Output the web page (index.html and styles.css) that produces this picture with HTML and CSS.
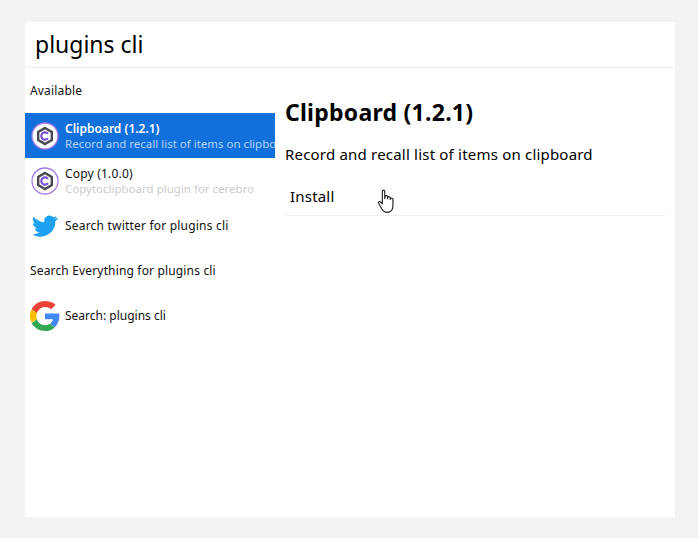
FILE: index.html
```html
<!DOCTYPE html>
<html lang="en">
<head>
    <meta charset="UTF-8">
    <meta name="viewport" content="width=device-width, initial-scale=1.0">
    <title>Cerebro</title>
    <link rel="stylesheet" href="styles.css">
</head>
<body>
    <svg class="defs" width="0" height="0">
        <symbol id="plugin" viewBox="0 0 30 30">
            <circle cx="15" cy="15" r="13" fill="#fff" stroke="#a67be8" stroke-width="1.3"/>
            <path d="M15 7l6.800 3.900v8.200L15 23l-6.800-3.900v-8.200z" fill="none" stroke="#4a4850" stroke-width="2.400"/>
            <path d="M18 12.800a3.700 3.700 0 1 0 0 4.400" fill="none" stroke="#7a4fd8" stroke-width="2.200"/>
        </symbol>
    </svg>

    <div class="app">
        <div class="search">plugins cli</div>
        <div class="main">
            <div class="results">
                <div class="group">Available</div>

                <div class="row selected">
                    <svg class="icon" width="30" height="30"><use href="#plugin"/></svg>
                    <div class="row-text">
                        <div class="title">Clipboard (1.2.1)</div>
                        <div class="sub">Record and recall list of items on clipboard</div>
                    </div>
                </div>

                <div class="row">
                    <svg class="icon" width="30" height="30"><use href="#plugin"/></svg>
                    <div class="row-text">
                        <div class="title">Copy (1.0.0)</div>
                        <div class="sub">Copytoclipboard plugin for cerebro</div>
                    </div>
                </div>

                <div class="row">
                    <svg class="icon" width="30" height="30" viewBox="-2 -2 28 28">
                        <path fill="#1da1f2" d="M23.500 4.600c-.9.400-1.800.6-2.800.8 1-.6 1.800-1.500 2.100-2.700-.9.600-2 1-3.100 1.200A4.900 4.900 0 0 0 11.400 8.400C7.400 8.200 3.800 6.300 1.400 3.300c-1.300 2.200-.7 5.100 1.500 6.600-.8 0-1.500-.2-2.200-.6 0 2.400 1.700 4.400 3.900 4.900-.7.200-1.500.2-2.200.1.600 2 2.400 3.400 4.600 3.400A9.900 9.900 0 0 1 .2 19.700a14 14 0 0 0 21.500-12.400c1-.7 1.800-1.600 2.400-2.500z"/>
                    </svg>
                    <div class="row-text">
                        <div class="title">Search twitter for plugins cli</div>
                    </div>
                </div>

                <div class="group">Search Everything for plugins cli</div>

                <div class="row">
                    <svg class="icon" width="30" height="30" viewBox="0 0 48 48">
                        <path fill="#ea4335" d="M24 9.500c3.900 0 7.100 1.300 9.700 3.700l7.200-7.200C36.500 2 30.800 0 24 0 14.600 0 6.500 5.400 2.600 13.200l8.400 6.500C12.900 13.800 18 9.500 24 9.500z"/>
                        <path fill="#4285f4" d="M47 24.500c0-1.600-.1-3.100-.4-4.500H24v9h12.900c-.6 3-2.200 5.500-4.700 7.200l7.500 5.800C44.100 38 47 31.800 47 24.500z"/>
                        <path fill="#fbbc05" d="M11 28.700a14.500 14.500 0 0 1 0-9L2.600 13.200a24 24 0 0 0 0 21.600z"/>
                        <path fill="#34a853" d="M24 48c6.500 0 11.900-2.100 15.700-5.800l-7.500-5.800c-2.100 1.400-4.800 2.200-8.200 2.200-6 0-11.100-4-13-9.500l-8.400 6.500C6.500 42.600 14.600 48 24 48z"/>
                    </svg>
                    <div class="row-text">
                        <div class="title tight">Search: plugins cli</div>
                    </div>
                </div>
            </div>

            <div class="preview">
                <h2>Clipboard (1.2.1)</h2>
                <p>Record and recall list of items on clipboard</p>
                <div class="action">Install</div>
            </div>
        </div>

        <svg class="hand" width="19" height="26" viewBox="0 0 18 25">
            <path fill="#fff" stroke="#222" stroke-width="1.1" stroke-linejoin="round" d="M5 2.200c0-1.500 2.300-1.500 2.300 0v7l.4-2.200c.8-1 2.200-.7 2.300.4v2l.3-1.500c.8-.9 2.200-.6 2.300.5v1.700l.3-.9c.8-.8 2.200-.4 2.300.7v6.300c0 3.800-2.200 6.300-5.400 6.300-2.500 0-4-1-5.300-3.200L1.500 14c-.9-1.400.7-2.600 1.800-1.500L5 14.300z"/>
        </svg>
    </div>
</body>
</html>
```

FILE: styles.css
```css
* {
    margin: 0;
    padding: 0;
    box-sizing: border-box;
}

body {
    font-family: "Noto Sans", "Open Sans", sans-serif;
    background: #f3f3f3;
    color: #111;
    padding: 22px 23px 21px 25px;
    height: 538px;
    overflow: hidden;
}

.defs {
    position: absolute;
}

.app {
    position: relative;
    background: white;
    height: 495px;
}

.search {
    height: 46px;
    padding-left: 10px;
    border-bottom: 1px solid #eee;
    font-size: 23px;
    line-height: 45px;
    color: #000;
}

.main {
    display: flex;
}

.results {
    width: 250px;
    flex-shrink: 0;
}

.group {
    height: 45px;
    padding-left: 5px;
    font-size: 12px;
    letter-spacing: .16px;
    line-height: 45px;
}

.row {
    display: flex;
    align-items: center;
    gap: 5px;
    height: 45px;
    padding-left: 5px;
    overflow: hidden;
    white-space: nowrap;
}

.row.selected {
    background: #1170dc;
    color: white;
}

.icon {
    flex-shrink: 0;
}

.title {
    font-size: 12px;
    letter-spacing: .2px;
    line-height: 15px;
}

.title.tight {
    letter-spacing: 0;
}

.sub {
    font-size: 11.5px;
    line-height: 15px;
    color: #ccc;
}

.selected .title {
    font-weight: 600;
    letter-spacing: 0;
}

.selected .sub {
    color: #b5d3f5;
}

.preview {
    flex: 1;
    padding: 0 10px;
}

.preview h2 {
    font-size: 23px;
    letter-spacing: .25px;
    line-height: 30px;
    margin-top: 29px;
    color: #000;
}

.preview p {
    font-size: 15px;
    letter-spacing: .2px;
    line-height: 20px;
    margin-top: 17px;
    color: #000;
}

.action {
    height: 40px;
    margin-top: 12px;
    padding-left: 5px;
    font-size: 15px;
    letter-spacing: .2px;
    line-height: 40px;
    border-bottom: 1px solid #eee;
    color: #000;
}

.hand {
    position: absolute;
    left: 352px;
    top: 167px;
}
```
